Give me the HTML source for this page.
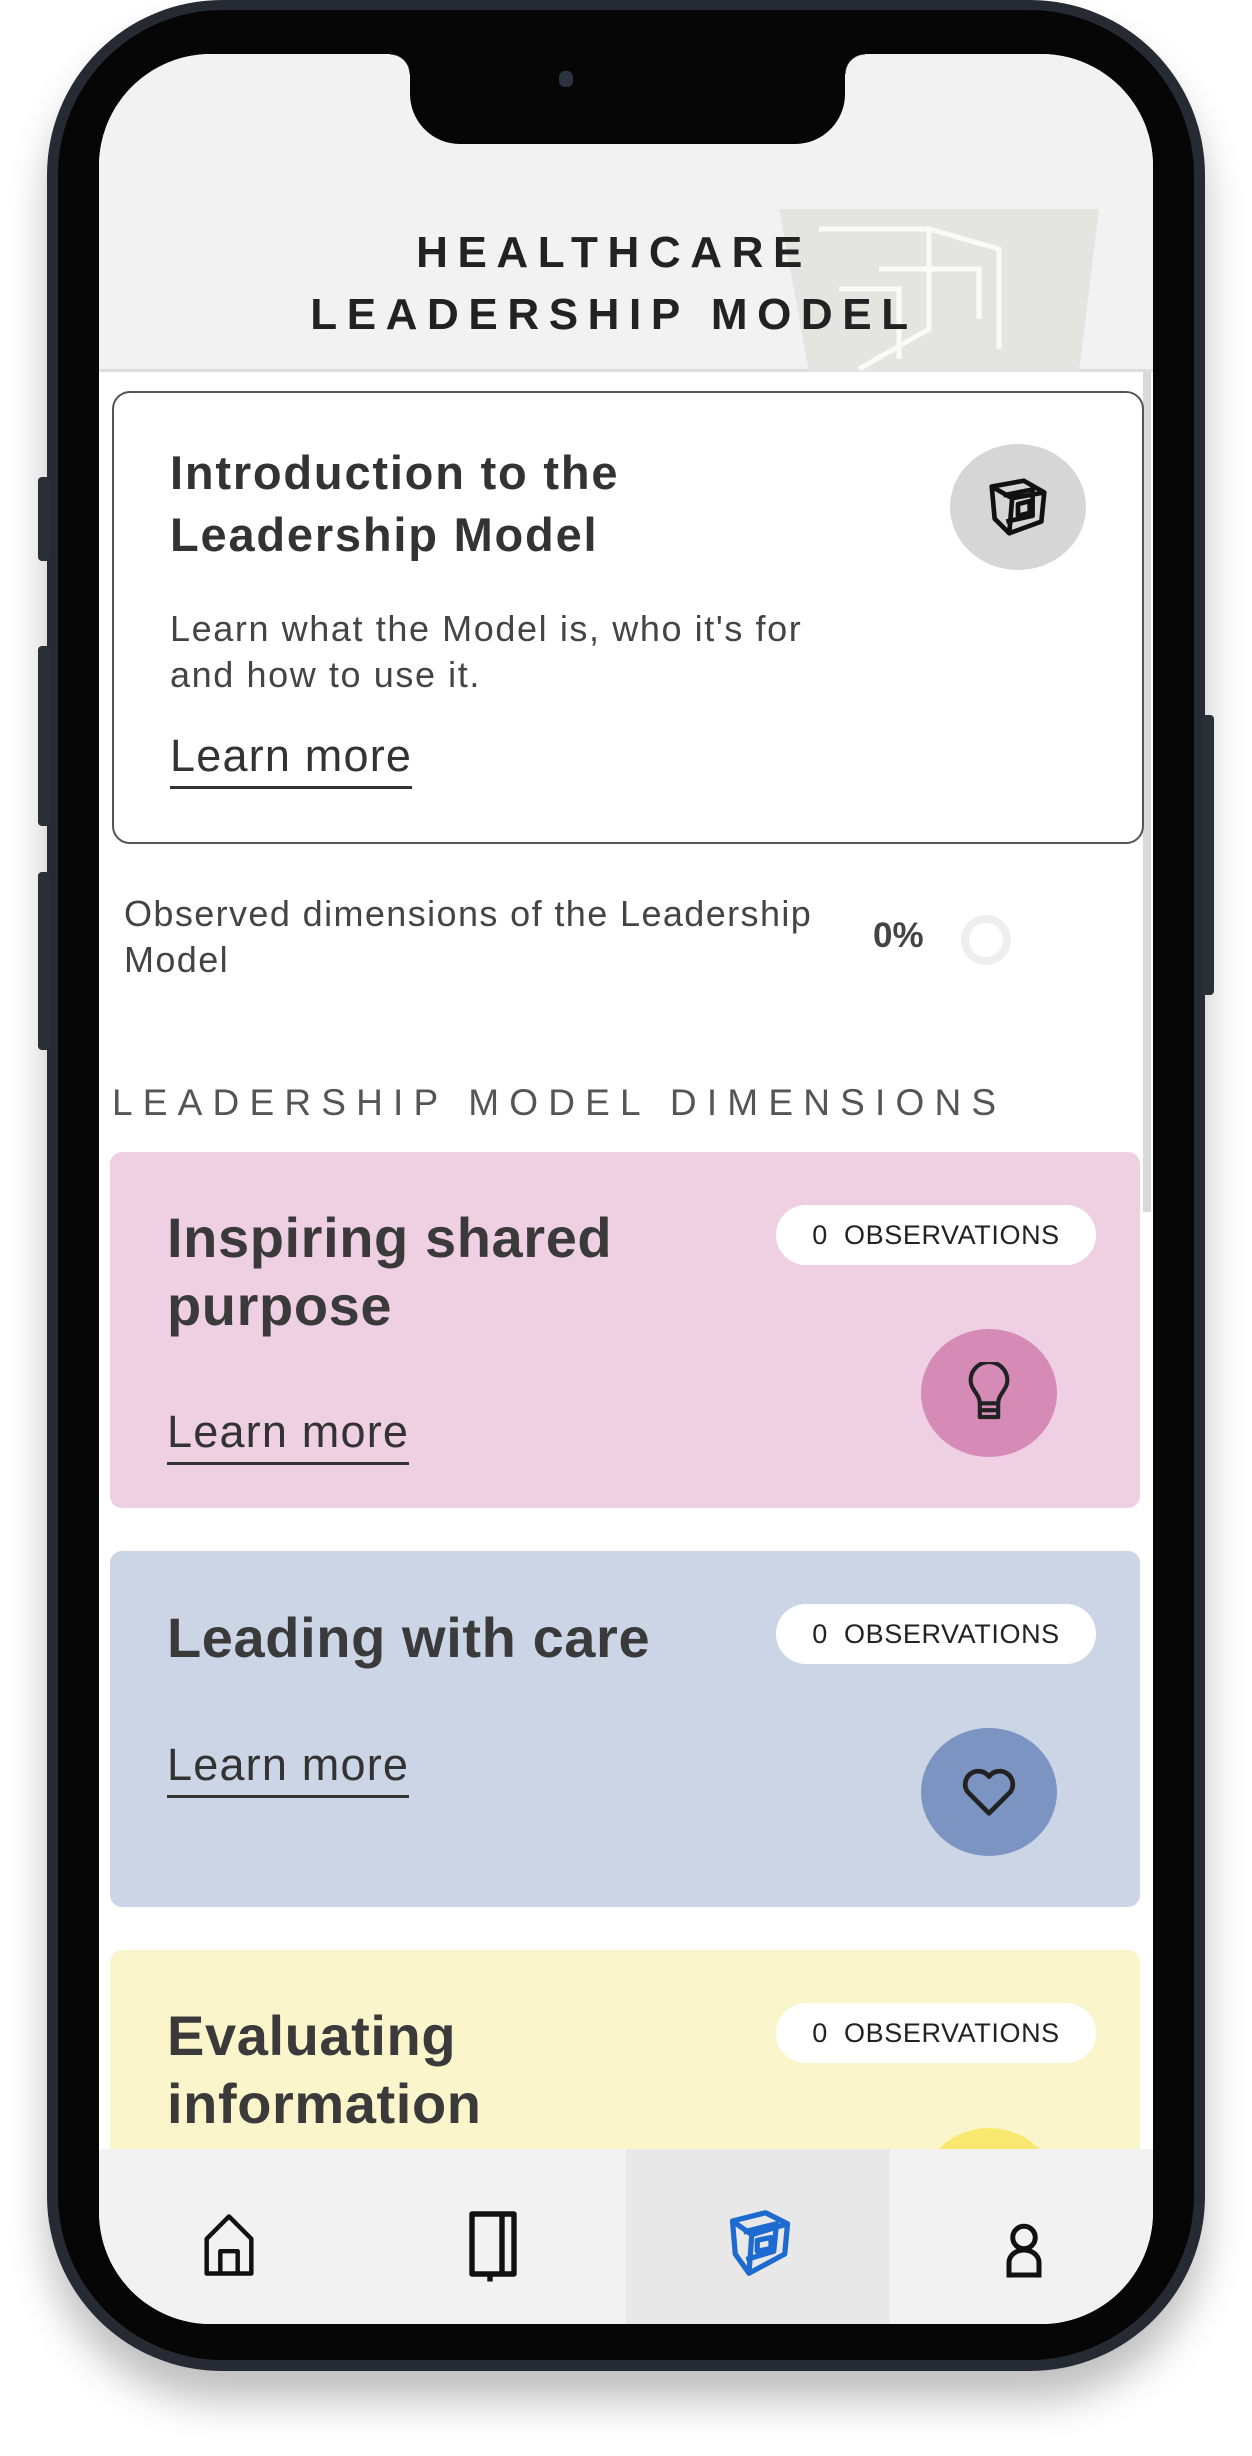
<!DOCTYPE html>
<html><head><meta charset="utf-8"><style>
*{margin:0;padding:0;box-sizing:border-box}
html,body{width:1252px;height:2456px;background:#fff;overflow:hidden;font-family:"Liberation Sans",sans-serif}
.abs{position:absolute}
.frame{left:47px;top:0;width:1158px;height:2371px;border-radius:175px;background:#262a33;box-shadow:0 30px 40px rgba(0,0,0,.25)}
.bezel{left:58px;top:10px;width:1136px;height:2350px;border-radius:165px;background:#060606}
.screen{left:99px;top:54px;width:1054px;height:2270px;border-radius:112px;background:#fff;overflow:hidden}
.btn{background:#2a2e36;border-radius:4px}
.lm{font-size:45px;color:#333;border-bottom:3px solid #333;padding-bottom:4px;display:inline-block;letter-spacing:1.2px}
.badge{background:#fff;border-radius:30px;width:320px;height:60px;font-size:27px;color:#222;display:flex;align-items:center;justify-content:center;letter-spacing:0.6px}
.ttl{font-size:56px;font-weight:bold;color:#3a3a3a;line-height:68px;letter-spacing:0.6px}
.circ{border-radius:50%;width:136px;height:128px;display:flex;align-items:center;justify-content:center}
</style></head><body>
<div class="abs frame"></div>
<div class="abs btn" style="left:38px;top:477px;width:12px;height:84px"></div>
<div class="abs btn" style="left:38px;top:646px;width:12px;height:180px"></div>
<div class="abs btn" style="left:38px;top:872px;width:12px;height:178px"></div>
<div class="abs btn" style="left:1202px;top:715px;width:12px;height:280px"></div>
<div class="abs bezel"></div>
<div class="abs screen">
  <div class="abs" style="left:0;top:0;width:1054px;height:318px;background:#f2f2f2;border-bottom:3px solid #ddd"></div>
  <svg class="abs" style="left:680px;top:155px" width="320" height="163" viewBox="0 0 320 163">
    <polygon points="0,0 320,0 300,163 30,163" fill="#e4e4e0"/>
    <g fill="none" stroke="#fff" stroke-width="5" opacity=".8">
      <path d="M40 20 L150 20 L150 120 L80 160 M150 20 L220 40 L220 140 M100 60 L200 60 L200 110 M60 80 L120 80 L120 150"/>
    </g>
  </svg>
  <div class="abs" style="left:-12px;top:168px;width:1054px;text-align:center;font-size:44px;letter-spacing:9.6px;color:#222;line-height:62px;font-weight:bold">HEALTHCARE<br>LEADERSHIP MODEL</div>
  <div class="abs" style="left:311px;top:0;width:435px;height:90px;background:#060606;border-radius:0 0 50px 50px"></div>
  <div class="abs" style="left:291px;top:0;width:20px;height:20px;background:radial-gradient(circle at 0 100%,transparent 19px,#060606 20px)"></div>
  <div class="abs" style="left:746px;top:0;width:20px;height:20px;background:radial-gradient(circle at 100% 100%,transparent 19px,#060606 20px)"></div>
  <div class="abs" style="left:460px;top:17px;width:14px;height:16px;border-radius:6px;background:#2b3340"></div>
  <div class="abs" style="left:1044px;top:318px;width:8px;height:840px;background:#d8d8d8"></div>
  <div class="abs" style="left:13px;top:337px;width:1032px;height:453px;border:2.5px solid #555;border-radius:18px;background:#fff"></div>
  <div class="abs" style="left:71px;top:388px;font-size:47px;font-weight:bold;color:#333;line-height:62px;letter-spacing:1.8px">Introduction to the<br>Leadership Model</div>
  <div class="abs" style="left:71px;top:552px;font-size:36px;color:#444;line-height:46px;letter-spacing:1.6px">Learn what the Model is, who it's for<br>and how to use it.</div>
  <div class="abs lm" style="left:71px;top:676px">Learn more</div>
  <div class="abs circ" style="left:851px;top:390px;background:#d6d6d6;width:136px;height:126px">
    <svg width="70" height="70" viewBox="0 0 24 24" fill="none" stroke="#111" stroke-width="1.6" stroke-linejoin="round"><path d="M3 5 L14 3 L21 7 L20 17 L9 21 L4 16 Z M3 5 L10 9 L21 7 M10 9 L9 21 M7 8 L17 6 L17 15 L8 17 M12 11 L16 10 L16 14 L12 15 Z"/></svg>
  </div>
  <div class="abs" style="left:25px;top:837px;font-size:36px;color:#444;line-height:46px;letter-spacing:1.4px">Observed dimensions of the Leadership<br>Model</div>
  <div class="abs" style="left:774px;top:862px;font-size:35px;font-weight:bold;color:#444">0%</div>
  <div class="abs" style="left:862px;top:861px;width:50px;height:50px;border-radius:50%;border:8px solid #eee"></div>
  <div class="abs" style="left:13px;top:1028px;font-size:37px;letter-spacing:10.2px;color:#555">LEADERSHIP MODEL DIMENSIONS</div>
  <div class="abs" style="left:11px;top:1098px;width:1030px;height:356px;background:#efd0e3;border-radius:12px"></div>
  <div class="abs ttl" style="left:68px;top:1150px">Inspiring shared<br>purpose</div>
  <div class="abs badge" style="left:677px;top:1151px">0&nbsp; OBSERVATIONS</div>
  <div class="abs lm" style="left:68px;top:1352px">Learn more</div>
  <div class="abs circ" style="left:822px;top:1275px;background:#d58bb6">
    <svg width="46" height="62" viewBox="0 0 20 27" fill="none" stroke="#222" stroke-width="1.8" stroke-linejoin="round"><path d="M6 18 C6 14 2 12 2 8 A8 8 0 0 1 18 8 C18 12 14 14 14 18 Z M6 18 V24 H14 V18 M6 21 H14"/></svg>
  </div>
  <div class="abs" style="left:11px;top:1497px;width:1030px;height:356px;background:#ccd5e6;border-radius:12px"></div>
  <div class="abs ttl" style="left:68px;top:1550px">Leading with care</div>
  <div class="abs badge" style="left:677px;top:1550px">0&nbsp; OBSERVATIONS</div>
  <div class="abs lm" style="left:68px;top:1685px">Learn more</div>
  <div class="abs circ" style="left:822px;top:1674px;background:#7b94c2">
    <svg width="58" height="52" viewBox="0 0 24 22" fill="none" stroke="#222" stroke-width="2" stroke-linejoin="round"><path d="M12 20 L3 11 A5 5 0 0 1 12 4.5 A5 5 0 0 1 21 11 Z"/></svg>
  </div>
  <div class="abs" style="left:11px;top:1896px;width:1030px;height:400px;background:#fbf5cc;border-radius:12px"></div>
  <div class="abs ttl" style="left:68px;top:1948px">Evaluating<br>information</div>
  <div class="abs badge" style="left:677px;top:1949px">0&nbsp; OBSERVATIONS</div>
  <div class="abs" style="left:822px;top:2074px;width:136px;height:128px;border-radius:50%;background:#f9e870"></div>
  <div class="abs" style="left:0;top:2095px;width:1054px;height:180px;background:#f2f2f2"></div>
  <div class="abs" style="left:527px;top:2095px;width:264px;height:180px;background:#e8e8e8"></div>
  <svg class="abs" style="left:105px;top:2160px" width="50" height="62" viewBox="0 0 20 25" fill="none" stroke="#111" stroke-width="1.8" stroke-linejoin="round"><path d="M1 24 V10 L10 1 L19 10 V24 Z M6.5 24 V15 H13.5 V24"/></svg>
  <svg class="abs" style="left:370px;top:2157px" width="48" height="72" viewBox="0 0 16 24" fill="none" stroke="#111" stroke-width="1.8" stroke-linejoin="round"><path d="M1 1 H15 V21 H1 Z M11 1 V21 M7 21 V23.5"/></svg>
  <svg class="abs" style="left:628px;top:2153px" width="66" height="72" viewBox="0 0 24 26" fill="none" stroke="#1d6ad0" stroke-width="1.9" stroke-linejoin="round"><path d="M2 5 L14 2 L22 6 L21 17 L8 24 L3 17 Z M2 5 L9 10 L22 6 M9 10 L8 24 M6 9 L18 6 L17 16 L7 19 M11 12 L16 11 L16 15 L11 16 Z"/></svg>
  <svg class="abs" style="left:905px;top:2168px" width="40" height="56" viewBox="0 0 16 22" fill="none" stroke="#111" stroke-width="2"><circle cx="8" cy="6" r="4.5"/><path d="M2 21 V16 A6 5 0 0 1 14 16 V21 Z"/></svg>
</div>
</body></html>
